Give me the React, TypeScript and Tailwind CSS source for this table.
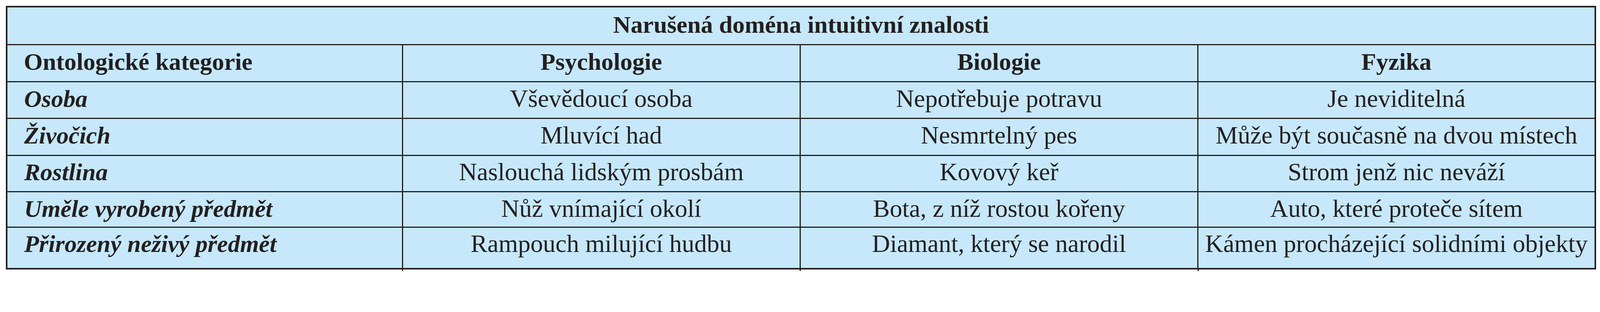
import React from "react";

const cols = "grid grid-cols-[1009.8px_1017.8px_1018.7px_1016px]";

type Row = { label: string; cells: [string, string, string]; h: string; pb: string };

const rows: Row[] = [
  { label: "Osoba", cells: ["Vševědoucí osoba", "Nepotřebuje potravu", "Je neviditelná"], h: "h-[93.3px]", pb: "pb-[7px]" },
  { label: "Živočich", cells: ["Mluvící had", "Nesmrtelný pes", "Může být současně na dvou místech"], h: "h-[95.1px]", pb: "pb-[7px]" },
  { label: "Rostlina", cells: ["Naslouchá lidským prosbám", "Kovový keř", "Strom jenž nic neváží"], h: "h-[93.3px]", pb: "pb-[7px]" },
  { label: "Uměle vyrobený předmět", cells: ["Nůž vnímající okolí", "Bota, z níž rostou kořeny", "Auto, které proteče sítem"], h: "h-[90.7px]", pb: "pb-[3.6px]" },
  { label: "Přirozený neživý předmět", cells: ["Rampouch milující hudbu", "Diamant, který se narodil", "Kámen procházející solidními objekty"], h: "h-[105.8px]", pb: "pb-[19.6px]" },
];

export default function App() {
  return (
    <div className="w-[4106px] h-[711px] bg-white pt-[15.1px] pl-[15.1px] font-['Liberation_Serif',serif] text-[#231f20]">
      <div className="w-[4071.2px] border-[4.5px] border-[#231f20] bg-[#c6e8fa]">
        <div className="h-[94.2px] flex items-center justify-center pb-[5.3px] text-[62.2px] font-bold leading-none whitespace-nowrap">
          Narušená doména intuitivní znalosti
        </div>
        <div className={`${cols} h-[95.1px] border-t-[3.6px] border-[#231f20] text-[62.2px] font-bold leading-none whitespace-nowrap`}>
          <div className="flex items-center pl-[41.8px] pb-[8.9px]">Ontologické kategorie</div>
          <div className="flex items-center justify-center pb-[8.9px] border-l-[3.6px] border-[#231f20]">Psychologie</div>
          <div className="flex items-center justify-center pb-[8.9px] border-l-[3.6px] border-[#231f20]">Biologie</div>
          <div className="flex items-center justify-center pb-[8.9px] border-l-[3.6px] border-[#231f20]">Fyzika</div>
        </div>
        {rows.map((r) => (
          <div key={r.label} className={`${cols} ${r.h} border-t-[3.6px] border-[#231f20] leading-none whitespace-nowrap`}>
            <div className={`flex items-center pl-[42.7px] ${r.pb} text-[62.2px] font-bold italic`}>{r.label}</div>
            {r.cells.map((c) => (
              <div key={c} className={`flex items-center justify-center ${r.pb} text-[64px] border-l-[3.6px] border-[#231f20]`}>
                {c}
              </div>
            ))}
          </div>
        ))}
      </div>
      <div className={`${cols} w-[4062.3px] h-[4.4px] px-[4.5px] box-content`}>
        <div />
        <div className="border-l-[3.6px] border-[#231f20]" />
        <div className="border-l-[3.6px] border-[#231f20]" />
        <div className="border-l-[3.6px] border-[#231f20]" />
      </div>
    </div>
  );
}
